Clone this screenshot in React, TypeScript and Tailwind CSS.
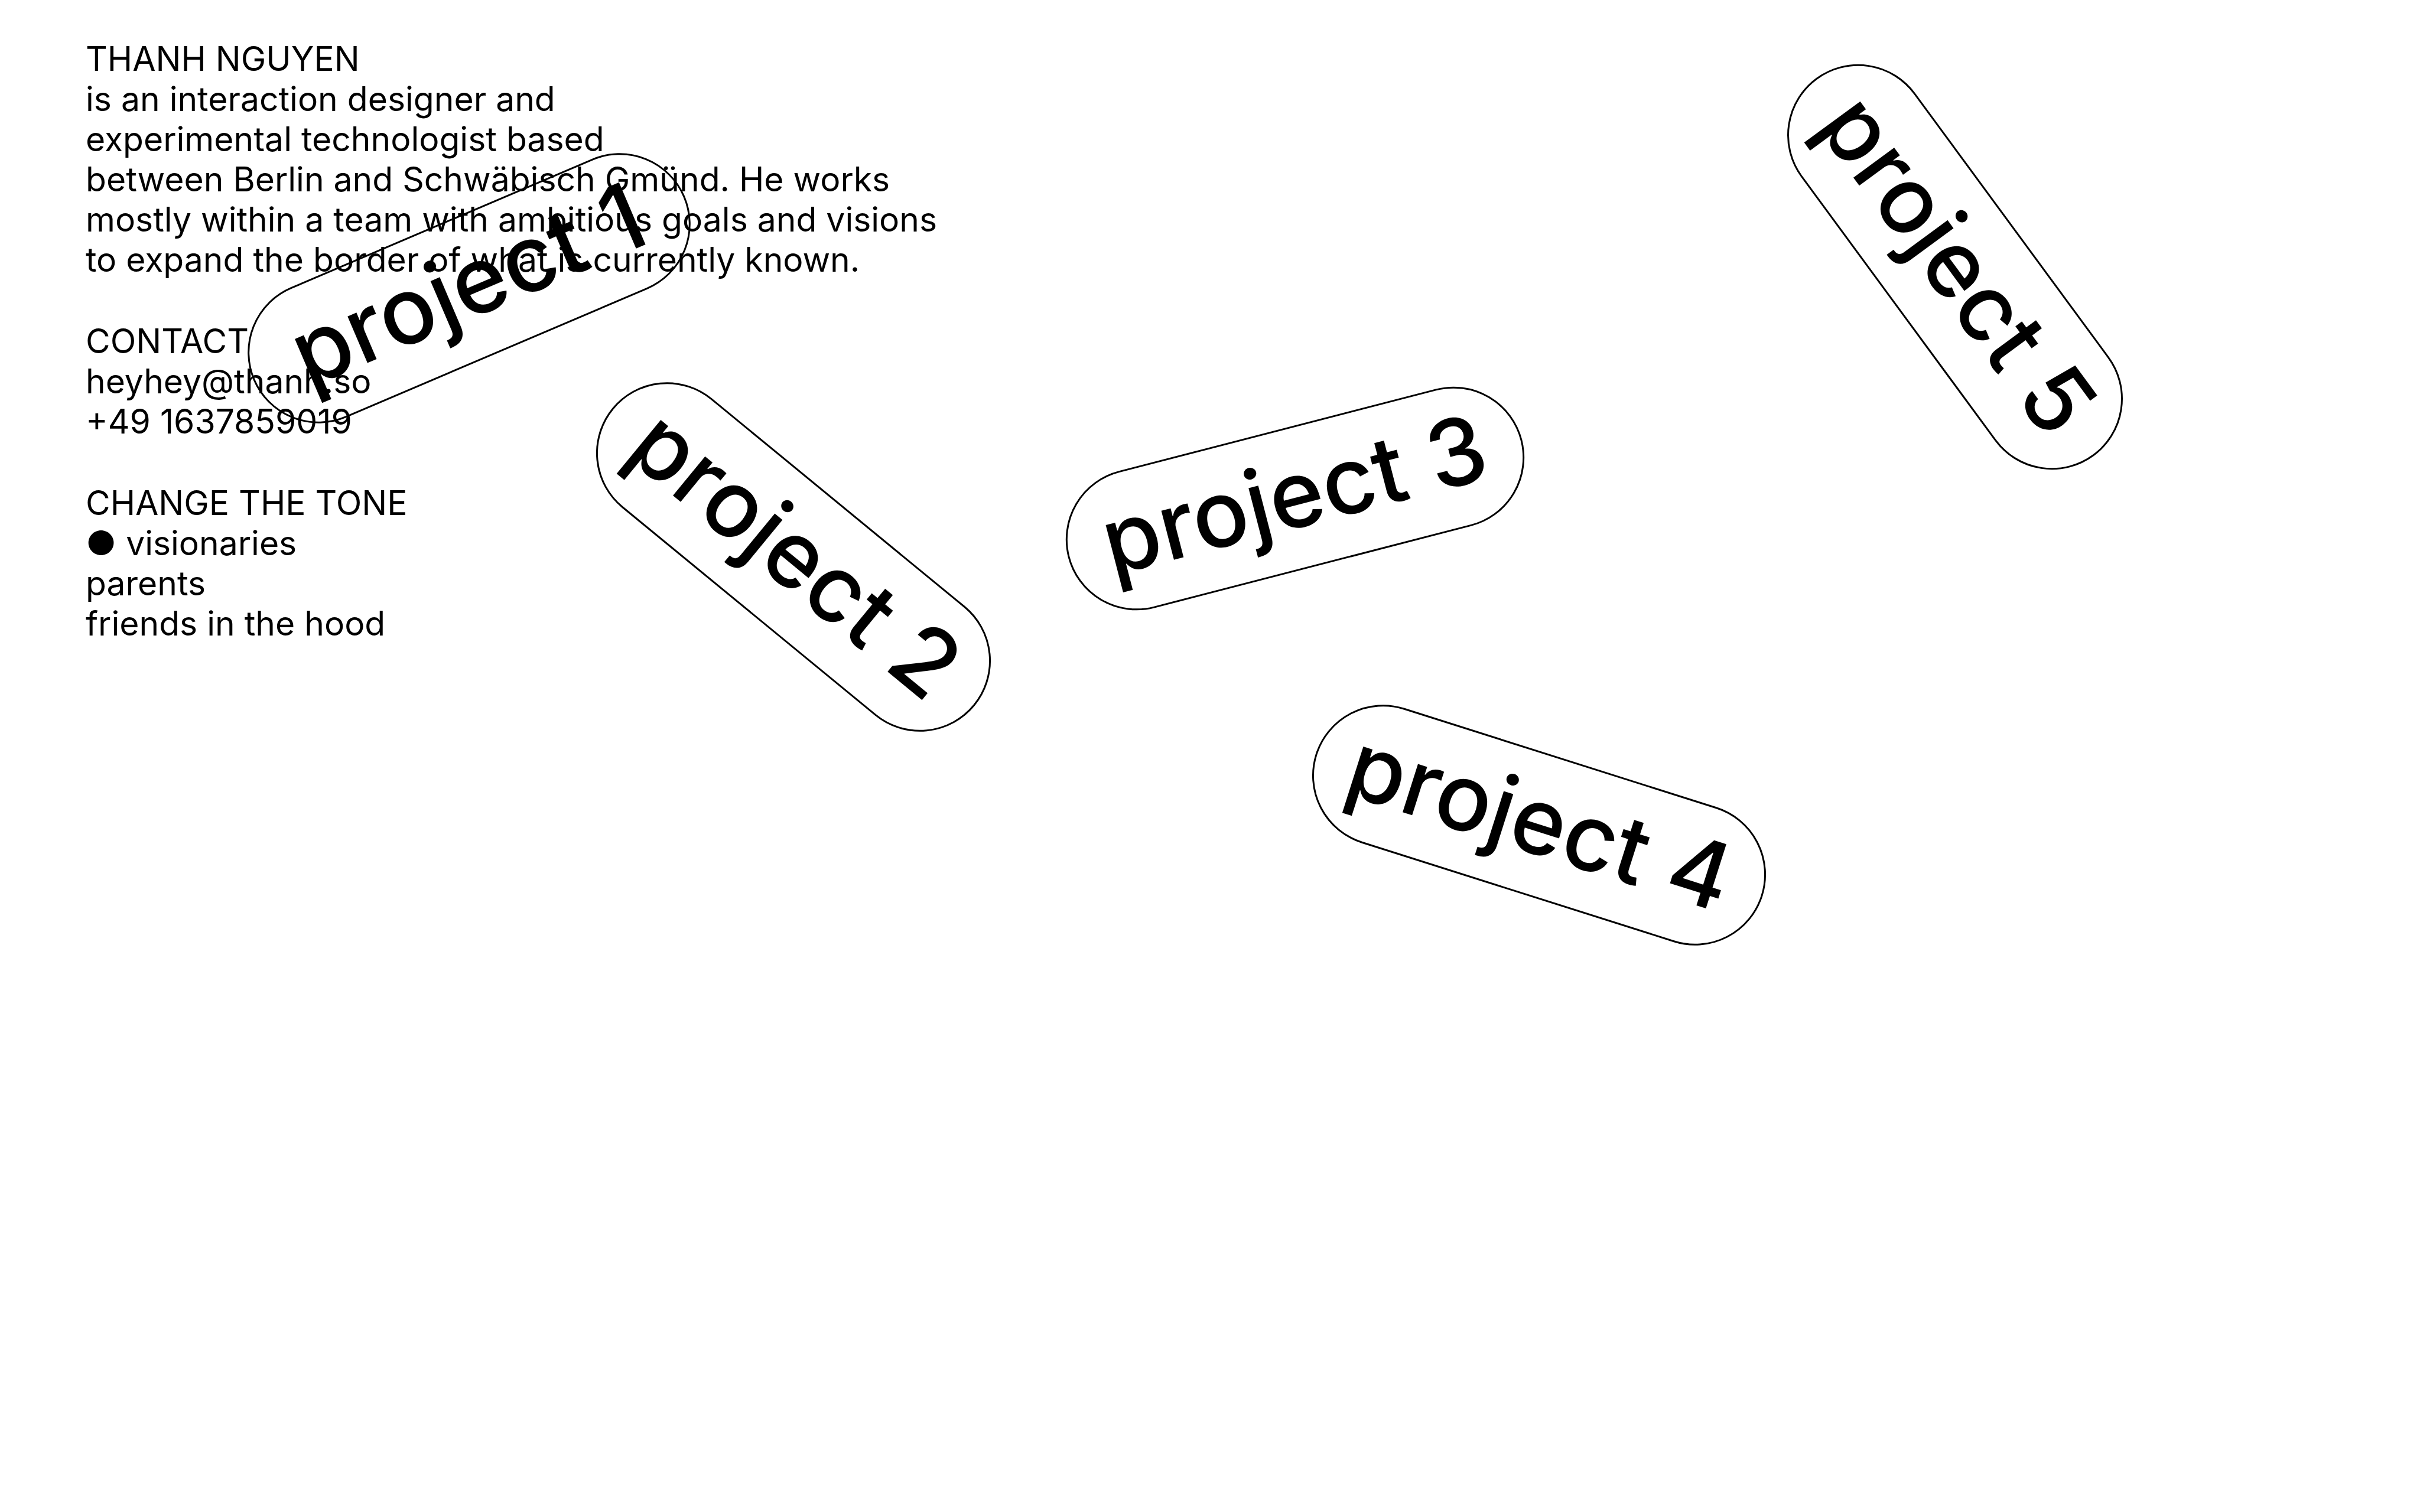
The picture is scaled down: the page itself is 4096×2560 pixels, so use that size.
import { useState } from "react";

const tones = ["visionaries", "parents", "friends in the hood"];

const projects = [
  { name: "project 1", place: "left-[397px] top-[368px] rotate-[-23.1deg]" },
  { name: "project 2", place: "left-[946px] top-[823px] rotate-[39.4deg]" },
  { name: "project 3", place: "left-[1795px] top-[724px] rotate-[-14.5deg]" },
  { name: "project 4", place: "left-[2208px] top-[1277px] rotate-[17.6deg]" },
  { name: "project 5", place: "left-[2912px] top-[332px] rotate-[53.7deg]" },
];

export default function App() {
  const [tone, setTone] = useState(tones[0]);

  return (
    <div className="relative min-h-screen overflow-hidden bg-white font-['Inter',sans-serif] text-black">
      <main className="flex flex-col items-start gap-[70px] px-[145px] py-[66px] text-[57px] leading-[68px]">
        <section>
          <h1>THANH NGUYEN</h1>
          <p>
            is an interaction designer and
            <br />
            experimental technologist based
            <br />
            between Berlin and Schwäbisch Gmünd. He works
            <br />
            mostly within a team with ambitious goals and visions
            <br />
            to expand the border of what is currently known.
          </p>
        </section>

        <section className="flex flex-col items-start">
          <h2>CONTACT</h2>
          <a href="mailto:heyhey@thanh.so">heyhey@thanh.so</a>
          <a href="tel:+491637859019">+49 1637859019</a>
        </section>

        <section className="flex flex-col items-start">
          <h2>CHANGE THE TONE</h2>
          {tones.map((name) => (
            <button key={name} type="button" aria-pressed={name === tone} onClick={() => setTone(name)}>
              {name === tone ? `● ${name}` : name}
            </button>
          ))}
        </section>
      </main>

      <nav aria-label="Projects">
        {projects.map(({ name, place }) => (
          <a
            key={name}
            href={`#${name.replace(" ", "-")}`}
            className={`absolute flex h-[240px] w-[794px] items-center justify-center rounded-full border-3 border-black pb-4 text-[157px] leading-none font-medium whitespace-nowrap ${place}`}
          >
            {name}
          </a>
        ))}
      </nav>
    </div>
  );
}
